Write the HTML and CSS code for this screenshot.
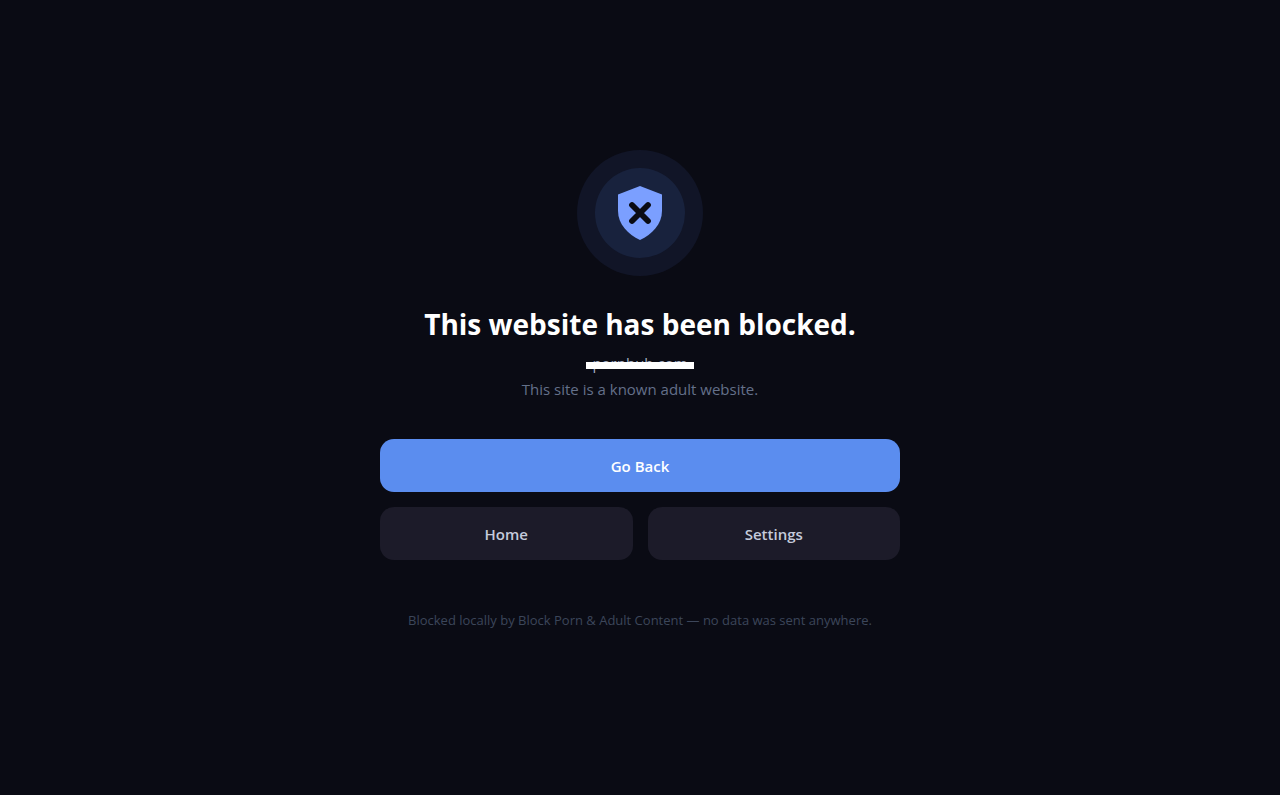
FILE: index.html
```html
<!DOCTYPE html>
<html lang="en">
<head>
    <meta charset="UTF-8">
    <meta name="viewport" content="width=device-width, initial-scale=1.0">
    <title>Website blocked</title>
    <link rel="stylesheet" href="styles.css">
</head>
<body>

<main class="blocked-page">
    <div class="blocked-content">
        <!-- Shield icon -->
        <div class="icon-outer">
            <div class="icon-inner">
                <svg class="shield" viewBox="0 0 44 54" aria-hidden="true">
                    <path d="M22 0 L44 8.5 V25 C44 38 34 48.5 22 54 C10 48.5 0 38 0 25 V8.5 Z" fill="#7b9fff"/>
                    <path d="M14 19 L30 35 M30 19 L14 35" fill="none" stroke="#0a0b14" stroke-width="5.8" stroke-linecap="round"/>
                </svg>
            </div>
        </div>

        <h1>This website has been blocked.</h1>
        <p class="domain">pornhub.com</p>
        <p class="reason">This site is a known adult website.</p>

        <!-- Actions -->
        <div class="actions">
            <button type="button" class="btn btn-primary">Go Back</button>
            <button type="button" class="btn">Home</button>
            <button type="button" class="btn">Settings</button>
        </div>

        <p class="footer-note">Blocked locally by Block Porn &amp; Adult Content — no data was sent anywhere.</p>
    </div>
</main>

</body>
</html>
```

FILE: styles.css
```css
* {
    box-sizing: border-box;
}

body {
    font-family: 'Segoe UI', 'Open Sans', 'Noto Sans', sans-serif;
    background-color: #ffffff;
    margin: 0;
}

.blocked-page {
    min-height: 100vh;
    padding: 24px;
    background-color: #0a0b14;
    border-bottom: 5px solid #ffffff;
    display: flex;
    align-items: center;
    justify-content: center;
}

.blocked-content {
    width: 100%;
    max-width: 520px;
    display: flex;
    flex-direction: column;
    align-items: center;
    text-align: center;
    padding-bottom: 15px;
}

/* Icon rings */
.icon-outer,
.icon-inner {
    display: flex;
    align-items: center;
    justify-content: center;
    border-radius: 50%;
}

.icon-outer {
    width: 126px;
    height: 126px;
    margin-bottom: 28px;
    background-color: #111527;
}

.icon-inner {
    width: 90px;
    height: 90px;
    background-color: #18223d;
}

.shield {
    width: 44px;
    height: 54px;
}

h1 {
    margin: 0 0 8px;
    font-size: 28px;
    line-height: 40px;
    font-weight: 700;
    color: #ffffff;
}

p {
    margin: 0;
}

.domain,
.reason {
    font-size: 15px;
    line-height: 22px;
    color: #64708a;
}

.domain {
    position: relative;
    margin-bottom: 4px;
    padding: 0 6px;
    color: #a3adc2;
}

/* Bar drawn across the domain */
.domain::after {
    content: '';
    position: absolute;
    left: 0;
    right: 0;
    top: 10px;
    height: 7px;
    background-color: #ffffff;
}

.actions {
    width: 100%;
    margin-top: 39px;
    display: grid;
    grid-template-columns: 1fr 1fr;
    gap: 15px;
}

.btn {
    height: 53px;
    border: none;
    border-radius: 14px;
    background-color: #1c1b29;
    color: #c5cbdc;
    font-family: inherit;
    font-size: 15px;
    font-weight: 600;
    cursor: pointer;
}

.btn:hover {
    background-color: #262536;
}

.btn-primary {
    grid-column: 1 / -1;
    background-color: #5b8def;
    color: #ffffff;
}

.btn-primary:hover {
    background-color: #6d9bf3;
}

.footer-note {
    margin-top: 50px;
    font-size: 13px;
    line-height: 20px;
    color: #3c465a;
}
```
